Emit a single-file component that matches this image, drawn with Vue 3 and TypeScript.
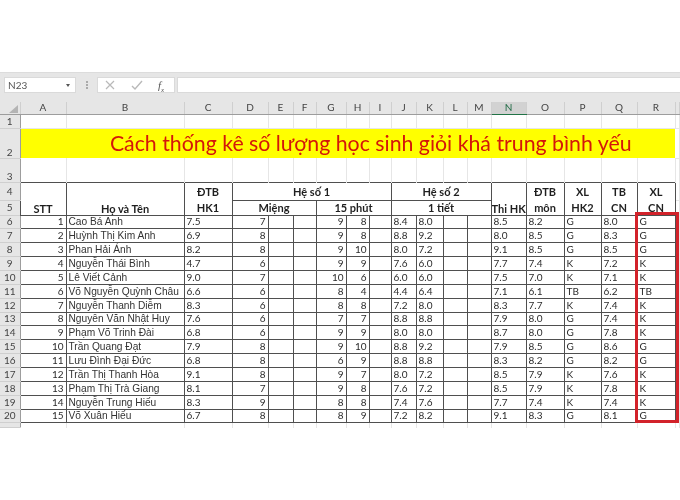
<script setup lang="ts">
// Excel sheet: class results table with a red highlight round the last column
interface Student {
  name: string
  hk1: string
  mieng: number
  g: number
  h: number
  j: string
  k: string
  thi: string
  mon: string
  hk2: string
  tb: string
  xl: string
}

const columns = [
  { label: 'A', width: 46 }, { label: 'B', width: 118 }, { label: 'C', width: 48 },
  { label: 'D', width: 36 }, { label: 'E', width: 25 }, { label: 'F', width: 23 },
  { label: 'G', width: 30 }, { label: 'H', width: 23 }, { label: 'I', width: 22 },
  { label: 'J', width: 25 }, { label: 'K', width: 27 }, { label: 'L', width: 24 },
  { label: 'M', width: 24 }, { label: 'N', width: 35 }, { label: 'O', width: 38 },
  { label: 'P', width: 37 }, { label: 'Q', width: 36 }, { label: 'R', width: 38 },
]

function row(name: string, hk1: string, mieng: number, g: number, h: number, j: string, k: string, thi: string, mon: string, hk2: string, tb: string, xl: string): Student {
  return { name, hk1, mieng, g, h, j, k, thi, mon, hk2, tb, xl }
}

const students: Student[] = [
  row('Cao Bá Anh', '7.5', 7, 9, 8, '8.4', '8.0', '8.5', '8.2', 'G', '8.0', 'G'),
  row('Huỳnh Thị Kim Anh', '6.9', 8, 9, 8, '8.8', '9.2', '8.0', '8.5', 'G', '8.3', 'G'),
  row('Phan Hải Ánh', '8.2', 8, 9, 10, '8.0', '7.2', '9.1', '8.5', 'G', '8.5', 'G'),
  row('Nguyễn Thái Bình', '4.7', 6, 9, 9, '7.6', '6.0', '7.7', '7.4', 'K', '7.2', 'K'),
  row('Lê Viết Cảnh', '9.0', 7, 10, 6, '6.0', '6.0', '7.5', '7.0', 'K', '7.1', 'K'),
  row('Võ Nguyễn Quỳnh Châu', '6.6', 6, 8, 4, '4.4', '6.4', '7.1', '6.1', 'TB', '6.2', 'TB'),
  row('Nguyễn Thanh Diễm', '8.3', 6, 8, 8, '7.2', '8.0', '8.3', '7.7', 'K', '7.4', 'K'),
  row('Nguyễn Văn Nhật Huy', '7.6', 6, 7, 7, '8.8', '8.8', '7.9', '8.0', 'G', '7.4', 'K'),
  row('Phạm Võ Trinh Đài', '6.8', 6, 9, 9, '8.0', '8.0', '8.7', '8.0', 'G', '7.8', 'K'),
  row('Trần Quang Đạt', '7.9', 8, 9, 10, '8.8', '9.2', '7.9', '8.5', 'G', '8.6', 'G'),
  row('Lưu Đình Đại Đức', '6.8', 8, 6, 9, '8.8', '8.8', '8.3', '8.2', 'G', '8.2', 'G'),
  row('Trần Thị Thanh Hòa', '9.1', 8, 9, 7, '8.0', '7.2', '8.5', '7.9', 'K', '7.6', 'K'),
  row('Phạm Thị Trà Giang', '8.1', 7, 9, 8, '7.6', '7.2', '8.5', '7.9', 'K', '7.8', 'K'),
  row('Nguyễn Trung Hiếu', '8.3', 9, 8, 8, '7.4', '7.6', '7.7', '7.4', 'K', '7.4', 'K'),
  row('Võ Xuân Hiếu', '6.7', 8, 8, 9, '7.2', '8.2', '9.1', '8.3', 'G', '8.1', 'G'),
]
</script>

<template>
  <div class="page">
    <div class="formula-bar">
      <div class="name-box">
        <span>N23</span>
        <i class="caret"></i>
      </div>
      <div class="grip"></div>
      <div class="fx-box">
        <svg width="12" height="12" viewBox="0 0 12 12" fill="none" stroke="#b9b9b9" stroke-width="1.2">
          <path d="M2 2l8 8M10 2l-8 8" />
        </svg>
        <svg width="12" height="12" viewBox="0 0 12 12" fill="none" stroke="#b9b9b9" stroke-width="1.4">
          <path d="M1 7l3 3 7-8" />
        </svg>
        <span class="fx">f<sub>x</sub></span>
      </div>
      <div class="formula-input"></div>
    </div>

    <div class="sheet">
      <table class="grid">
        <colgroup>
          <col class="col-head" />
          <col v-for="c in columns" :key="c.label" :style="{ width: c.width + 'px' }" />
          <col />
        </colgroup>
        <thead>
          <tr class="letters">
            <th class="corner"><i class="corner-mark"></i></th>
            <th v-for="c in columns" :key="c.label" :class="{ active: c.label === 'N' }">{{ c.label }}</th>
            <th></th>
          </tr>
        </thead>
        <tbody>
          <tr class="r1">
            <th class="num">1</th>
            <td v-for="c in columns" :key="c.label" class="blank"></td>
            <td class="blank"></td>
          </tr>
          <tr class="r2">
            <th class="num low">2</th>
            <td colspan="18" class="title">Cách thống kê số lượng học sinh giỏi khá trung bình yếu</td>
            <td class="blank"></td>
          </tr>
          <tr class="r3">
            <th class="num low">3</th>
            <td v-for="c in columns" :key="c.label" class="blank"></td>
            <td class="blank"></td>
          </tr>
          <tr class="r4">
            <th class="num">4</th>
            <td rowspan="2" class="hd bottom">STT</td>
            <td rowspan="2" class="hd bottom">Họ và Tên</td>
            <td class="hd no-b">ĐTB</td>
            <td colspan="6" class="hd">Hệ số 1</td>
            <td colspan="4" class="hd">Hệ số 2</td>
            <td rowspan="2" class="hd bottom">Thi HK</td>
            <td class="hd no-b">ĐTB</td>
            <td class="hd no-b">XL</td>
            <td class="hd no-b">TB</td>
            <td class="hd no-b">XL</td>
            <td class="blank"></td>
          </tr>
          <tr class="r5">
            <th class="num">5</th>
            <td class="hd no-t">HK1</td>
            <td colspan="3" class="hd">Miệng</td>
            <td colspan="3" class="hd">15 phút</td>
            <td colspan="4" class="hd">1 tiết</td>
            <td class="hd no-t">môn</td>
            <td class="hd no-t">HK2</td>
            <td class="hd no-t">CN</td>
            <td class="hd no-t">CN</td>
            <td class="blank"></td>
          </tr>
          <tr v-for="(s, i) in students" :key="s.name" class="data">
            <th class="num">{{ i + 6 }}</th>
            <td class="right">{{ i + 1 }}</td>
            <td class="name">{{ s.name }}</td>
            <td>{{ s.hk1 }}</td>
            <td class="right">{{ s.mieng }}</td>
            <td></td>
            <td></td>
            <td class="right">{{ s.g }}</td>
            <td class="right">{{ s.h }}</td>
            <td></td>
            <td>{{ s.j }}</td>
            <td>{{ s.k }}</td>
            <td></td>
            <td></td>
            <td>{{ s.thi }}</td>
            <td>{{ s.mon }}</td>
            <td>{{ s.hk2 }}</td>
            <td>{{ s.tb }}</td>
            <td>{{ s.xl }}</td>
            <td class="blank"></td>
          </tr>
          <tr class="r21">
            <th class="num"></th>
            <td v-for="c in columns" :key="c.label" class="blank"></td>
            <td class="blank"></td>
          </tr>
        </tbody>
      </table>
      <div class="highlight"></div>
    </div>
  </div>
</template>

<style>
html,
body {
  margin: 0;
  background: #fff;
}
</style>

<style scoped>
.page {
  width: 680px;
  height: 500px;
  overflow: hidden;
  padding-top: 72px;
  box-sizing: border-box;
  background: #fff;
  font-family: "Liberation Sans", Arial, sans-serif;
  filter: blur(0.45px);
}

.formula-bar {
  height: 30px;
  background: #e6e6e6;
  border-top: 1px solid #dcdcdc;
  box-sizing: border-box;
  display: flex;
  align-items: center;
  padding: 0 0 5px 4px;
}

.name-box {
  width: 72px;
  height: 16px;
  background: #fff;
  border: 1px solid #dadada;
  box-sizing: border-box;
  display: flex;
  align-items: center;
  justify-content: space-between;
  padding: 0 5px 0 3px;
  font-family: Lato, sans-serif;
  font-size: 10px;
  color: #555;
}

.caret {
  width: 0;
  height: 0;
  border-left: 2.5px solid transparent;
  border-right: 2.5px solid transparent;
  border-top: 3px solid #555;
}

.grip {
  width: 2px;
  height: 8px;
  margin: 0 9px 0 10px;
  border-left: 2px dotted #aaa;
  box-sizing: border-box;
}

.fx-box {
  width: 78px;
  height: 16px;
  background: #fff;
  border: 1px solid #dadada;
  box-sizing: border-box;
  display: flex;
  align-items: center;
  gap: 15px;
  padding-left: 6px;
}

.fx {
  font-family: "Liberation Serif", serif;
  font-style: italic;
  font-size: 11px;
  line-height: 12px;
  color: #555;
}

.fx sub {
  font-size: 7px;
  line-height: 0;
}

.formula-input {
  flex: 1;
  height: 16px;
  margin-left: 2px;
  background: #fff;
  border: 1px solid #dadada;
  border-right: 0;
  box-sizing: border-box;
}

.sheet {
  position: relative;
}

.grid {
  table-layout: fixed;
  width: 680px;
  border-collapse: collapse;
  font-size: 10px;
  color: #2b2b2b;
}

.col-head {
  width: 20px;
}

.grid th,
.grid td {
  padding: 0;
  overflow: hidden;
  white-space: nowrap;
  box-sizing: border-box;
}

.grid td {
  border: 1px solid #4f4f4f;
  padding: 0 2px;
  line-height: 11px;
  font-family: Lato, sans-serif;
}

.letters {
  height: 12px;
}

.letters th {
  background: #e6e6e6;
  border-right: 1px solid #cfcfcf;
  border-bottom: 1px solid #9d9d9d;
  font-family: Lato, sans-serif;
  font-weight: 400;
  font-size: 10px;
  line-height: 11px;
  color: #444;
}

.letters th.active {
  background: #d2d2d2;
  color: #1f6b45;
  border-bottom: 1px solid #217346;
}

.letters .corner {
  position: relative;
}

.corner-mark {
  position: absolute;
  right: 2px;
  bottom: 1px;
  width: 0;
  height: 0;
  border-left: 9px solid transparent;
  border-bottom: 8px solid #b4b4b4;
}

.num {
  background: #e6e6e6;
  border-right: 1px solid #9d9d9d;
  border-bottom: 1px solid #cfcfcf;
  font-family: Lato, sans-serif;
  font-weight: 400;
  font-size: 10px;
  line-height: 11px;
  color: #444;
}

.num.low {
  vertical-align: bottom;
}

.r1 {
  height: 14px;
}

.r2 {
  height: 30px;
}

.r3 {
  height: 24px;
}

.r4 {
  height: 18px;
}

.r5 {
  height: 15px;
}

.data {
  height: 13.87px;
}

.r21 {
  height: 5px;
}

.grid td.blank {
  border: 0;
  border-right: 1px solid #e6e6e6;
  border-bottom: 1px solid #e6e6e6;
}

.r3 td.blank {
  border-bottom: 0;
}

.r21 td.blank {
  border-bottom: 0;
}

.grid td.title {
  border: 0;
  padding: 0 0 1px 46px;
  background: #ffff00;
  color: #d4170a;
  font-size: 21.3px;
  text-align: center;
  line-height: 26px;
}

.grid td.hd {
  font-weight: 700;
  font-size: 11px;
  color: #1f1f1f;
  text-align: center;
  padding: 0;
}

.grid td.bottom {
  vertical-align: bottom;
  padding-bottom: 1px;
}

.grid td.no-b {
  border-bottom: 0;
  vertical-align: middle;
}

.grid td.no-t {
  border-top: 0;
  vertical-align: middle;
}

.grid td.right {
  text-align: right;
}

.grid td.name {
  font-family: "Liberation Sans", Arial, sans-serif;
  font-size: 10.2px;
  padding-left: 2px;
  color: #333;
}

.highlight {
  position: absolute;
  left: 635px;
  top: 110px;
  width: 44px;
  height: 211px;
  box-sizing: border-box;
  border: 3px solid #d2222a;
}
</style>
